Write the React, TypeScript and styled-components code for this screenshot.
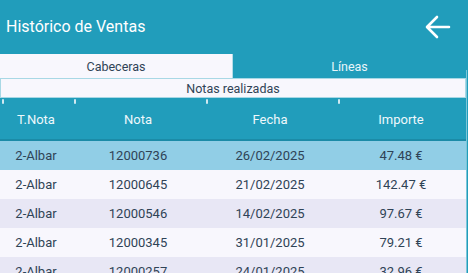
import styled, { createGlobalStyle } from "styled-components";

const GlobalStyle = createGlobalStyle`
	html, body {
		margin: 0;
		padding: 0;
		background: #219dbb;
		overflow: hidden;
	}
	* {
		box-sizing: border-box;
	}
`;

const TEAL = "#219dbb";
const INK = "#2f4356";
const COLUMNS = "72px 132px 132px 130px";

interface Venta {
	tipo: string;
	nota: string;
	fecha: string;
	importe: string;
}

const ventas: Venta[] = [
	{ tipo: "2-Albar", nota: "12000736", fecha: "26/02/2025", importe: "47.48 €" },
	{ tipo: "2-Albar", nota: "12000645", fecha: "21/02/2025", importe: "142.47 €" },
	{ tipo: "2-Albar", nota: "12000546", fecha: "14/02/2025", importe: "97.67 €" },
	{ tipo: "2-Albar", nota: "12000345", fecha: "31/01/2025", importe: "79.21 €" },
	{ tipo: "2-Albar", nota: "12000257", fecha: "24/01/2025", importe: "32.96 €" },
];

const Screen = styled.div`
	width: 468px;
	height: 273px;
	background: ${TEAL};
	font-family: Roboto, "Noto Sans", sans-serif;
	display: flex;
	flex-direction: column;
	overflow: hidden;
`;

const Header = styled.header`
	height: 54px;
	flex-shrink: 0;
	display: flex;
	align-items: center;
	justify-content: space-between;
	padding: 0 17px 0 6px;
`;

const Title = styled.h1`
	margin: 0;
	font-size: 16px;
	font-weight: 400;
	color: #ffffff;
	padding-bottom: 1px;
`;

const BackButton = styled.button`
	background: none;
	border: none;
	padding: 0;
	display: flex;
	cursor: pointer;
`;

const Body = styled.div`
	width: 467px;
	display: flex;
	flex-direction: column;
	position: relative;

	&::after {
		content: "";
		position: absolute;
		top: 16px;
		bottom: 0;
		right: 0;
		width: 1px;
		background: #7cc6d8;
	}
`;

const Tabs = styled.div`
	display: grid;
	grid-template-columns: 233px 233px;
	height: 24px;
	flex-shrink: 0;
`;

const Tab = styled.div<{ $active?: boolean }>`
	display: flex;
	align-items: center;
	justify-content: center;
	font-size: 12.5px;
	padding-top: 1px;
	color: ${({ $active }) => ($active ? INK : "#e9f6fa")};
	background: ${({ $active }) => ($active ? "#f8f7fd" : "transparent")};
	border-right: ${({ $active }) => ($active ? "1px solid #b5dde8" : "none")};
`;

const Caption = styled.div`
	width: 466px;
	height: 20px;
	flex-shrink: 0;
	display: flex;
	align-items: center;
	justify-content: center;
	font-size: 12.5px;
	color: ${INK};
	background: #f8f7fd;
	border: 1px solid #a8d8e5;
`;

const HeadRow = styled.div`
	display: grid;
	grid-template-columns: ${COLUMNS};
	height: 43px;
	flex-shrink: 0;
	border-bottom: 2px solid #1b8ba7;
`;

const HeadCell = styled.div`
	position: relative;
	display: flex;
	align-items: center;
	justify-content: center;
	font-size: 13px;
	color: #eef8fb;
	padding-top: 1px;

	&::before {
		content: "";
		position: absolute;
		top: 1px;
		left: 2px;
		width: 2px;
		height: 5px;
		border-radius: 1px;
		background: #cfe9f1;
	}
`;

const Row = styled.div<{ $tone: "selected" | "light" | "dark" }>`
	display: grid;
	grid-template-columns: ${COLUMNS};
	width: 466px;
	height: 29px;
	flex-shrink: 0;
	background: ${({ $tone }) =>
		$tone === "selected" ? "#91cee6" : $tone === "light" ? "#f8f7fd" : "#e8e7f5"};
`;

const Cell = styled.div`
	display: flex;
	align-items: center;
	justify-content: center;
	font-size: 13px;
	color: ${INK};
`;

const BackArrow = () => (
	<svg width="26" height="24" viewBox="0 0 26 24" fill="none">
		<path
			d="M 24 12 L 2.5 12 M 12 2 L 2 12 L 12 22"
			stroke="#ffffff"
			strokeWidth="2.6"
			strokeLinecap="round"
			strokeLinejoin="round"
		/>
	</svg>
);

export default function App() {
	return (
		<>
			<GlobalStyle />
			<Screen>
				<Header>
					<Title>Histórico de Ventas</Title>
					<BackButton aria-label="Volver">
						<BackArrow />
					</BackButton>
				</Header>
				<Body>
					<Tabs>
						<Tab $active>Cabeceras</Tab>
						<Tab>Líneas</Tab>
					</Tabs>
					<Caption>Notas realizadas</Caption>
					<HeadRow>
						<HeadCell>T.Nota</HeadCell>
						<HeadCell>Nota</HeadCell>
						<HeadCell>Fecha</HeadCell>
						<HeadCell>Importe</HeadCell>
					</HeadRow>
					{ventas.map((v, i) => (
						<Row key={v.nota} $tone={i === 0 ? "selected" : i % 2 === 1 ? "light" : "dark"}>
							<Cell>{v.tipo}</Cell>
							<Cell>{v.nota}</Cell>
							<Cell>{v.fecha}</Cell>
							<Cell>{v.importe}</Cell>
						</Row>
					))}
				</Body>
			</Screen>
		</>
	);
}
